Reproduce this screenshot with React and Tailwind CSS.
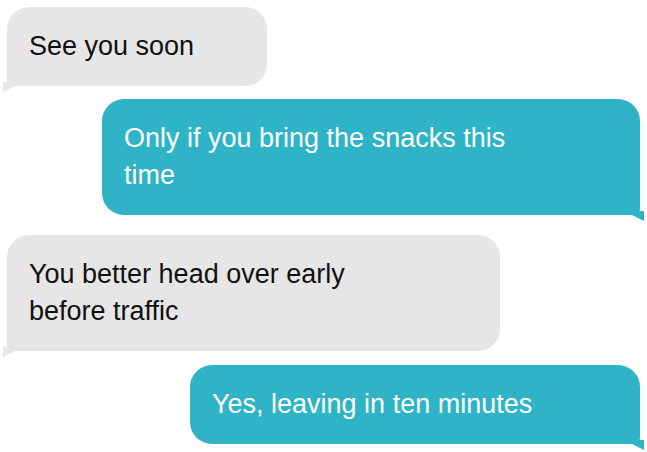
const messages = [
  { from: 'them', lines: ['See you soon'], w: 'w-[260px]' },
  { from: 'me', lines: ['Only if you bring the snacks this', 'time'], w: 'w-[538px]' },
  { from: 'them', lines: ['You better head over early', 'before traffic'], w: 'w-[493px]' },
  { from: 'me', lines: ['Yes, leaving in ten minutes'], w: 'w-[450px]' },
]

const Bubble = ({ msg }) => {
  const mine = msg.from === 'me'
  return (
    <div className={`flex ${mine ? 'justify-end' : 'justify-start'}`}>
      <div
        className={`relative ${msg.w} rounded-[22px] px-[22px] py-[21px] text-[27px] leading-[37px] ${
          mine ? 'bg-[#2fb3c6] text-white rounded-br-[6px]' : 'bg-[#e6e6e6] text-[#111] rounded-bl-[6px]'
        }`}
      >
        {msg.lines.map((l, i) => (
          <div key={i}>{l}</div>
        ))}
        {/* tail */}
        <svg
          className={`absolute bottom-[-6px] ${mine ? 'right-[-4px]' : 'left-[-4px]'}`}
          width="20"
          height="10"
          viewBox="0 0 20 10"
        >
          {mine ? (
            <path d="M0 0 H20 V10 Z" fill="#2fb3c6" />
          ) : (
            <path d="M0 0 H20 L0 10 Z" fill="#e6e6e6" />
          )}
        </svg>
      </div>
    </div>
  )
}

export default function App() {
  return (
    <div
      className="w-[647px] h-[452px] bg-white overflow-hidden flex flex-col pt-[7px] pl-[7px] pr-[7px]"
      style={{ fontFamily: '"Liberation Sans", Arial, sans-serif' }}
    >
      <div className="flex flex-col gap-[13px]">
        <Bubble msg={messages[0]} />
        <Bubble msg={messages[1]} />
      </div>
      <div className="flex flex-col gap-[14px] pt-[20px]">
        <Bubble msg={messages[2]} />
        <Bubble msg={messages[3]} />
      </div>
    </div>
  )
}
